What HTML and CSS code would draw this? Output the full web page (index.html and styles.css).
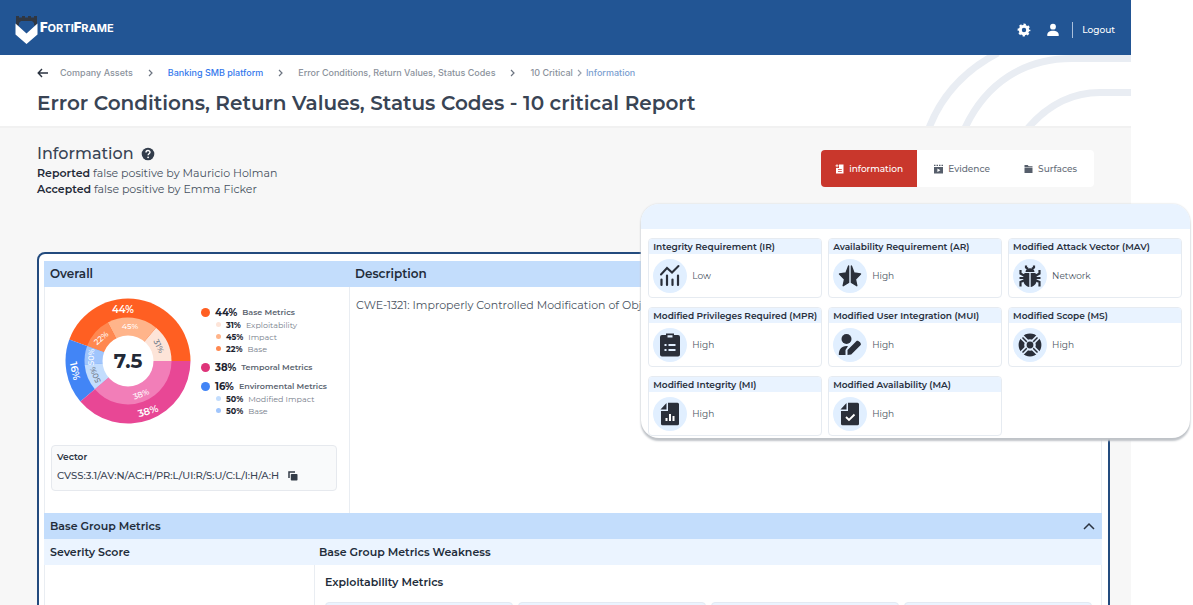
FILE: index.html
```html
<!DOCTYPE html>
<html lang="en">
<head>
<meta charset="utf-8">
<title>FortiFrame - Report</title>
<link rel="stylesheet" href="styles.css">
</head>
<body>
<div class="app">
  <header class="topbar">
    <a class="brand" href="#">
      <svg width="23" height="30" viewBox="0 0 23 30" aria-hidden="true">
        <path d="M1 1h3v1.500h3V1h3v1.500h3V1h3v1.500h3V1h3v11l-3-2V8l-2-2H6L4 8v2l-3 2z" fill="#303742"/>
        <path d="M0.500 8.500 11.500 18.500 22.500 8.500V19.500L11.500 29 0.500 19.500z" fill="#fff"/>
      </svg>
      <span class="wordmark"><b>F</b>ORTI<b>F</b>RAME</span>
    </a>
    <nav class="account">
      <button class="icon-btn" aria-label="Settings">
        <svg width="14" height="14" viewBox="-7 -7 14 14" fill="none" stroke="#fff"><circle r="3.700" stroke-width="3"/><circle r="5.400" stroke-width="2" stroke-dasharray="2.300 1.941" stroke-dashoffset="1.150"/></svg>
      </button>
      <button class="icon-btn" aria-label="Profile">
        <svg width="14" height="14" viewBox="0 0 14 14"><circle cx="7" cy="3.700" r="2.900" fill="#fff"/><path d="M1.300 13V11.500C1.300 9.300 4 7.800 7 7.800s5.700 1.500 5.700 3.700V13z" fill="#fff"/></svg>
      </button>
      <a class="logout" href="#">Logout</a>
    </nav>
  </header>

  <section class="heading">
    <svg class="arcs" width="211" height="71" viewBox="0 0 211 71" aria-hidden="true">
      <g fill="none" stroke="#e9edf3" stroke-width="7">
        <path d="M9 73Q28 24 78-2"/><path d="M45 73C66 28 104 3.500 152 3.500H211"/><path d="M108 73C128 50 152 37.500 180 37.500H211"/>
      </g>
    </svg>
    <nav class="crumbs">
      <a class="back" href="#" aria-label="Back"><svg width="12" height="10" viewBox="0 0 12 10"><path d="M11 5H1.500M5 1 1.200 5 5 9" fill="none" stroke="#2b3340" stroke-width="1.400"/></svg></a>
      <a href="#">Company Assets</a>
      <svg class="sep" width="5" height="8" viewBox="0 0 5 8"><path d="M1 1l3 3-3 3"/></svg>
      <a class="active" href="#">Banking SMB platform</a>
      <svg class="sep" width="5" height="8" viewBox="0 0 5 8"><path d="M1 1l3 3-3 3"/></svg>
      <a href="#">Error Conditions, Return Values, Status Codes</a>
      <svg class="sep" width="5" height="8" viewBox="0 0 5 8"><path d="M1 1l3 3-3 3"/></svg>
      <span class="tail"><a href="#">10 Critical</a><svg class="sep light" width="5" height="8" viewBox="0 0 5 8"><path d="M1 1l3 3-3 3"/></svg><a class="current" href="#">Information</a></span>
    </nav>
    <h1>Error Conditions, Return Values, Status Codes - 10 critical Report</h1>
  </section>

  <main class="content">
    <div class="intro">
      <div>
        <h2>Information
          <svg width="14" height="14" viewBox="0 0 14 14" role="img" aria-label="Help"><circle cx="7" cy="7" r="6.300" fill="#333d4b"/><path d="M5 5.500C5 2.900 9 3 9 5.300 9 6.900 7.100 6.700 7.100 8.300" fill="none" stroke="#fff" stroke-width="1.400"/><circle cx="7.100" cy="10.300" r=".9" fill="#fff"/></svg>
        </h2>
        <p><strong>Reported</strong> false positive by Mauricio Holman</p>
        <p><strong>Accepted</strong> false positive by Emma Ficker</p>
      </div>
      <div class="tabs">
        <button class="tab on"><svg width="9" height="10" viewBox="0 0 9 10"><path fill="#fff" fill-rule="evenodd" d="M4 .5h4.500v9H1V4h3zM3 5v.8h3.800V5zm0 2v.8h3.800V7z"/><path d="M2 .3v3M.5 1.800h3" stroke="#fff" stroke-width=".9"/></svg>information</button>
        <button class="tab"><svg width="9" height="10" viewBox="0 0 9 10"><path fill="#565e6b" fill-rule="evenodd" d="M0 .7h1.500v1.400H0zm2.500 0H4v1.400H2.500zm2.500 0h1.500v1.400H5zm2.500 0H9v1.400H7.500zM0 2.900h9v6.600H0zm3.400 1.500v3.600l3-1.800z"/></svg>Evidence</button>
        <button class="tab"><svg width="9" height="10" viewBox="0 0 9 10"><path fill="#565e6b" d="M.5 1h3.200l1 1.200h3.800V3H.5zM.5 3.500h8V9h-8z"/></svg>Surfaces</button>
      </div>
    </div>

    <section class="report">
      <div class="row band split-a"><h3>Overall</h3><h3>Description</h3></div>
      <div class="row split-a overall">
        <div class="score">
          <div class="chart">
            <svg class="donut" width="126" height="126" viewBox="-63 -63 126 126" role="img" aria-label="Overall score 7.5">
              <path fill="#ff5f22" d="M0 0H62.500A62.500 62.500 0 0 0-58.700-21.400z"/>
              <path fill="#4285f6" d="M0 0-58.700-21.400A62.500 62.500 0 0 0-47.600 40.500z"/>
              <path fill="#e84795" d="M0 0-47.600 40.500A62.500 62.500 0 0 0 62.500 0z"/>
              <path fill="#fde4d8" d="M0 0H43.500A43.500 43.500 0 0 0 28-33.300z"/>
              <path fill="#ffb48a" d="M0 0 28-33.300A43.500 43.500 0 0 0-20.200-38.500z"/>
              <path fill="#ff8850" d="M0 0-20.200-38.500A43.500 43.500 0 0 0-40.900-14.900z"/>
              <path fill="#a0c5fc" d="M0 0-40.900-14.900A43.500 43.500 0 0 0-43.300 4z"/>
              <path fill="#c3ddfd" d="M0 0-43.300 4A43.500 43.500 0 0 0-33.100 28.200z"/>
              <path fill="#f27eb8" d="M0 0-33.100 28.200A43.500 43.500 0 0 0 43.500 0z"/>
              <circle r="25.500" fill="#fff"/>
              <g class="outer-label">
                <text transform="translate(-5 -52)">44%</text>
                <text transform="translate(-53 10) rotate(78)">16%</text>
                <text transform="translate(20 50) rotate(-16)">38%</text>
              </g>
              <g class="inner-label">
                <text transform="translate(2 -35)">45%</text>
                <text transform="translate(-27 -23) rotate(-42)">22%</text>
                <text class="muted" transform="translate(31 -15) rotate(64)">31%</text>
                <text transform="translate(-37 -4) rotate(-88)">50%</text>
                <text class="muted" transform="translate(-33 14) rotate(-112)">50%</text>
                <text transform="translate(13 33) rotate(-22)">38%</text>
              </g>
              <text class="total">7.5</text>
            </svg>
            <div class="legend">
              <div class="group">
                <div class="main"><i class="dot orange"></i><b>44%</b><span>Base Metrics</span></div>
                <div class="sub"><i class="dot orange-1"></i><b>31%</b><span>Exploitability</span></div>
                <div class="sub"><i class="dot orange-2"></i><b>45%</b><span>Impact</span></div>
                <div class="sub"><i class="dot orange-3"></i><b>22%</b><span>Base</span></div>
              </div>
              <div class="group">
                <div class="main"><i class="dot pink"></i><b>38%</b><span>Temporal Metrics</span></div>
              </div>
              <div class="group">
                <div class="main"><i class="dot blue"></i><b>16%</b><span>Enviromental Metrics</span></div>
                <div class="sub"><i class="dot blue-1"></i><b>50%</b><span>Modified Impact</span></div>
                <div class="sub"><i class="dot blue-2"></i><b>50%</b><span>Base</span></div>
              </div>
            </div>
          </div>
          <div class="vector">
            <h4>Vector</h4>
            <div class="vector-line"><span>CVSS:3.1/AV:N/AC:H/PR:L/UI:R/S:U/C:L/I:H/A:H</span>
              <button class="icon-btn" aria-label="Copy"><svg width="10" height="10" viewBox="0 0 10 10"><path d="M1 7V1h6" fill="none" stroke="#333b47" stroke-width="1.500"/><rect x="2.800" y="2.900" width="6.700" height="6.600" rx=".8" fill="#333b47"/></svg></button>
            </div>
          </div>
        </div>
        <p class="description">CWE-1321: Improperly Controlled Modification of Object</p>
      </div>
      <div class="row band toggle"><h3>Base Group Metrics</h3>
        <button class="icon-btn" aria-label="Collapse"><svg width="12" height="8" viewBox="0 0 12 8"><path d="M1 7l5-5 5 5" fill="none" stroke="#2b3340" stroke-width="1.500"/></svg></button>
      </div>
      <div class="row subband split-b"><h3>Severity Score</h3><h3>Base Group Metrics Weakness</h3></div>
      <div class="row split-b lower">
        <div></div>
        <div class="weakness">
          <h3>Exploitability Metrics</h3>
          <div class="stubs"><div></div><div></div><div></div><div></div></div>
        </div>
      </div>
    </section>
  </main>
</div>

<aside class="panel">
  <div class="panel-head"></div>
  <div class="metrics">
    <article class="metric"><h4>Integrity Requirement (IR)</h4><div><span class="disc"><svg width="24" height="24" viewBox="0 0 24 24"><path d="M3 10.500 9 4l5 4.500L20.500 2" fill="none" stroke="#2a2f3a" stroke-width="2" stroke-linecap="round"/><path d="M3.500 15.500V21M9 11.500V21M14.500 15.500V21M20 11.500V21" stroke="#2a2f3a" stroke-width="2.200" stroke-linecap="round"/></svg></span>Low</div></article>
    <article class="metric"><h4>Availability Requirement (AR)</h4><div><span class="disc"><svg width="24" height="24" viewBox="0 0 24 24"><path fill="#2a2f3a" stroke="#2a2f3a" stroke-width="1.400" stroke-linejoin="round" d="M10.600 2v16.500L5.200 21.700 6.600 15.200 1.500 10l6.500-1zM13.400 2 16 9l6.500 1-5.100 5.200 1.400 6.500-5.400-3.200z"/></svg></span>High</div></article>
    <article class="metric"><h4>Modified Attack Vector (MAV)</h4><div><span class="disc"><svg width="24" height="24" viewBox="0 0 24 24"><path d="M8 1.500v2l2 1.500M16 1.500v2L14 5M2.500 6v3.500L7 12M21.500 6v3.500L17 12M1.500 14H7M22.500 14H17M7 16l-4.500 2v4.500M17 16l4.500 2v4.500" fill="none" stroke="#2a2f3a" stroke-width="2.200"/><path d="M7.500 8c0-5 9-5 9 0zM11.300 9v14c-3.300-.7-5.800-3-5.800-6v-5c0-1.300.6-2.300 1.300-3zm1.400 0v14c3.300-.7 5.800-3 5.800-6v-5c0-1.300-.6-2.300-1.300-3z" fill="#2a2f3a"/></svg></span>Network</div></article>
    <article class="metric"><h4>Modified Privileges Required (MPR)</h4><div><span class="disc"><svg width="24" height="24" viewBox="0 0 24 24"><path fill="#2a2f3a" fill-rule="evenodd" d="M4 2h4V.5h8V2h4a2 2 0 0 1 2 2v17.500a2 2 0 0 1-2 2H4a2 2 0 0 1-2-2V4a2 2 0 0 1 2-2zm5.500.3v2.200h5V2.300zM6.500 11v2h2v-2zm4 0v2h7v-2zm-4 5v2h2v-2zm4 0v2h7v-2z"/></svg></span>High</div></article>
    <article class="metric"><h4>Modified User Integration (MUI)</h4><div><span class="disc"><svg width="24" height="24" viewBox="0 0 24 24"><circle cx="8.500" cy="6" r="5" fill="#2a2f3a"/><path fill="#2a2f3a" d="M.8 22c0-5.500 2.500-9 7.700-9l1.500.3L7.500 17v5zM9.500 22v-5l9-9c1.300-1.300 5.500 2 4.200 4l-9.500 9.500z"/></svg></span>High</div></article>
    <article class="metric"><h4>Modified Scope (MS)</h4><div><span class="disc"><svg width="24" height="24" viewBox="-12 -12 24 24"><circle r="8.600" fill="none" stroke="#2a2f3a" stroke-width="5.600"/><path d="M-9-9 9 9M9-9-9 9" stroke="#e1efff" stroke-width="4.600"/><path d="M-7.500-7.500 7.500 7.500M7.500-7.500-7.500 7.500" stroke="#2a2f3a" stroke-width="1.500"/><circle r="4.500" fill="#e1efff"/><circle r="3.400" fill="#2a2f3a"/></svg></span>High</div></article>
    <article class="metric"><h4>Modified Integrity (MI)</h4><div><span class="disc"><svg width="24" height="24" viewBox="0 0 24 24"><path fill="#2a2f3a" d="M10 .8h9.500a1.500 1.500 0 0 1 1.500 1.500v19.500a1.500 1.500 0 0 1-1.500 1.500h-15A1.500 1.500 0 0 1 3 21.800V9h7zM8.500 1v6.500H2.500z"/><path d="M8.500 19v-3M12 19v-7M15.500 19v-5" stroke="#fff" stroke-width="2"/></svg></span>High</div></article>
    <article class="metric"><h4>Modified Availability (MA)</h4><div><span class="disc"><svg width="24" height="24" viewBox="0 0 24 24"><path fill="#2a2f3a" d="M10 .8h9.500a1.500 1.500 0 0 1 1.500 1.500v19.500a1.500 1.500 0 0 1-1.500 1.500h-15A1.500 1.500 0 0 1 3 21.800V9h7zM8.500 1v6.500H2.500z"/><path d="M8 15l3 3 5.500-5.500" fill="none" stroke="#fff" stroke-width="1.900"/></svg></span>High</div></article>
  </div>
</aside>
</body>
</html>
```

FILE: styles.css
```css
* { box-sizing: border-box; }
body {
  margin: 0;
  position: relative;
  padding-right: 62px;
  background: #fff;
  color: #2b3442;
  font: 10px/16px Montserrat, Inter, "Open Sans", sans-serif;
}
h1, h2, h3, h4, p { margin: 0; }
a { color: inherit; text-decoration: none; }
button { font: inherit; border: 0; background: none; padding: 0; cursor: pointer; }
svg { display: block; flex: none; }
.icon-btn { display: flex; }

.app { height: 100vh; overflow: hidden; background: #f7f7f7; }

.topbar {
  display: flex;
  justify-content: space-between;
  align-items: center;
  height: 55px;
  padding: 4px 16px 0 15px;
  background: #225594;
  color: #fff;
}
.brand { display: flex; align-items: center; gap: 2px; }
.wordmark { font: 700 11px/16px Inter, sans-serif; padding-bottom: 5px; }
.wordmark b { font-size: 13px; }
.account { display: flex; align-items: center; gap: 15px; }
.logout { border-left: 1px solid #a9bfdb; padding-left: 9px; margin-left: -3px; font-size: 9px; font-weight: 500; }

.heading {
  position: relative;
  padding: 10px 37px 9px;
  background: #fff;
  border-bottom: 2px solid #f1f1f1;
}
.arcs { position: absolute; right: 0; top: 0; }
.crumbs {
  display: flex;
  align-items: center;
  gap: 15px;
  color: #8b929c;
  font: 500 9px/16px Inter, sans-serif;
}
.back { margin-right: -4px; }
.sep path { fill: none; stroke: #6c7480; stroke-width: 1.2; }
.sep.light path { stroke: #9aa1ab; }
.active { color: #3478ec; }
.current { color: #7ba0d0; }
.tail { display: flex; align-items: center; gap: 4px; }
h1 { margin-top: 8px; font-size: 20px; line-height: 28px; font-weight: 600; color: #394454; }

.content { padding: 16px 21px 0 37px; }
.intro { display: flex; justify-content: space-between; align-items: center; padding-right: 16px; }
h2 { display: flex; align-items: center; gap: 7px; margin-bottom: 1px; font-size: 16px; line-height: 20px; font-weight: 500; color: #394454; }
.intro p { font-size: 11px; color: #465160; }
.intro strong { color: #1f2a38; font-weight: 600; }
.tabs { display: flex; height: 37px; margin-top: -4px; border-radius: 4px; overflow: hidden; background: #fff; }
.tab { display: flex; align-items: center; gap: 5px; padding: 0 17px; color: #656d79; font-size: 9px; font-weight: 500; }
.tab.on { background: #c9372c; color: #fff; padding: 0 14px; }

.report {
  margin-top: 55px;
  padding: 7px 6px 60px 5px;
  background: #fff;
  border: 2px solid #234b7e;
  border-radius: 8px;
}
.row { border: 0 solid #e9edf2; border-width: 0 1px; }
.band, .subband { border-color: transparent; }
h3 { font-size: 11px; line-height: 26px; font-weight: 600; color: #222c3a; padding-left: 5px; }
.band { background: #c3ddfc; }
.band.split-a h3 { font-size: 12px; }
.subband { background: #ebf4ff; }
.split-a { display: grid; grid-template-columns: 305px 1fr; }
.split-b { display: grid; grid-template-columns: 269px 1fr; }
.overall { min-height: 226px; }
.score { border-right: 1px solid #e9edf2; padding: 11px 12px 22px 6px; display: flex; flex-direction: column; justify-content: space-between; }
.chart { display: flex; align-items: center; gap: 10px; padding-left: 14px; }
.donut text { text-anchor: middle; dominant-baseline: central; fill: #fff; }
.outer-label { font-size: 10px; font-weight: 600; }
.inner-label { font-size: 8px; font-weight: 500; }
.donut .muted { fill: #727b88; }
.donut .total { font-size: 20px; font-weight: 700; fill: #222936; }

.legend { display: flex; flex-direction: column; gap: 6px; font-size: 8px; line-height: 12px; color: #78808c; }
.main, .sub { display: flex; align-items: center; gap: 5px; }
.main { font-weight: 600; line-height: 13px; color: #5b6470; }
.main b { font-size: 10px; }
.legend b { color: #1d2430; font-weight: 700; }
.sub { padding-left: 15px; }
.dot { width: 5px; height: 5px; border-radius: 50%; }
.main .dot { width: 9px; height: 9px; }
.orange { background: #ff5f22; }
.orange-1 { background: #fde4d8; }
.orange-2 { background: #ffb48a; }
.orange-3 { background: #ff8850; }
.pink { background: #de3479; }
.blue { background: #4285f6; }
.blue-1 { background: #c3ddfd; }
.blue-2 { background: #a0c5fc; }

.vector { padding: 3px 5px 4px; background: #f9fafb; border: 1px solid #e6e9ee; border-radius: 4px; }
.vector h4 { font-size: 9px; font-weight: 600; line-height: 16px; }
.vector-line { display: flex; align-items: center; gap: 9px; font-size: 10px; font-weight: 500; line-height: 21px; color: #394454; }
.description { padding: 10px 6px; font-size: 11px; color: #4a5462; }
.toggle { display: flex; justify-content: space-between; align-items: center; padding-right: 6px; }
.weakness { border-left: 1px solid #e9edf2; padding: 4px 9px 0 10px; }
.weakness h3 { padding: 0; }
.stubs { display: grid; grid-template-columns: repeat(4, 1fr); gap: 5px; margin-top: 7px; }
.stubs div { height: 16px; background: #ebf4ff; border: 1px solid #e3eaf3; border-radius: 4px 4px 0 0; }

.panel {
  position: absolute;
  top: 204px;
  right: 3px;
  width: 46%;
  border-radius: 18px;
  overflow: hidden;
  background: #fff;
  box-shadow: 0 3px 2px #bfc3c8, 0 0 2px #cbd0d6;
}
.panel-head { height: 25px; background: #e9f3ff; }
.metrics { display: grid; grid-template-columns: repeat(3, 1fr); gap: 9px 6px; padding: 9px 8px 2px 7px; }
.metric { border: 1px solid #e6ebf1; border-radius: 4px; overflow: hidden; }
.metric h4 { padding-left: 4px; background: #e9f3ff; font-size: 9px; line-height: 15px; font-weight: 600; color: #28303e; }
.metric div { display: flex; align-items: center; gap: 5px; padding: 5px 4px 4px; font-size: 9px; color: #4a5462; }
.disc { display: grid; place-items: center; width: 34px; height: 34px; border-radius: 50%; background: #e1efff; }
```
